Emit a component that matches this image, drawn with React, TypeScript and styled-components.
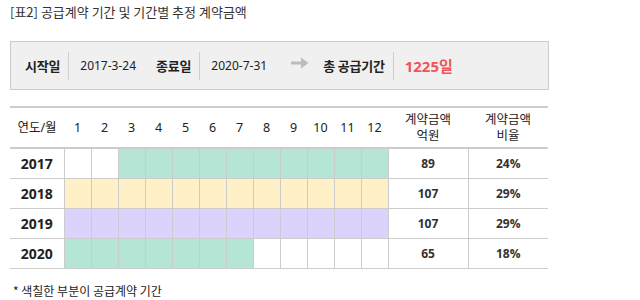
import React from "react";
import styled, { createGlobalStyle } from "styled-components";

const Global = createGlobalStyle`
  html, body { margin: 0; padding: 0; background: #fff; }
  body { font-family: "Noto Sans", "Noto Sans CJK KR", sans-serif; color: #222; }
`;

const Page = styled.div`
  width: 640px;
  height: 300px;
  box-sizing: border-box;
  padding: 3px 10px 0 10px;
  overflow: hidden;
`;

const Title = styled.div`
  font-family: "Noto Sans CJK KR", sans-serif;
  font-size: 13px;
  line-height: 18px;
  color: #333;
`;

const Summary = styled.div`
  margin-top: 20px;
  width: 539px;
  height: 49px;
  box-sizing: border-box;
  border: 1px solid #cccccc;
  background: #f0f0f0;
  display: flex;
  align-items: center;
  padding-left: 14px;
`;

const Field = styled.div<{ $after?: number }>`
  display: flex;
  align-items: center;
  margin-right: ${(p) => p.$after ?? 0}px;
`;

const Label = styled.span`
  font-family: "Noto Sans CJK KR", sans-serif;
  font-weight: 700;
  font-size: 13px;
  color: #222;
  letter-spacing: -0.2px;
`;

const Divider = styled.span`
  width: 1px;
  height: 28px;
  background: #cfcfcf;
  margin: 0 11px 0 8px;
`;

const Value = styled.span`
  font-family: "Noto Sans", sans-serif;
  font-size: 12px;
  color: #222;
`;

const Total = styled.span`
  font-family: "Noto Sans", "Noto Sans CJK KR", sans-serif;
  font-weight: 700;
  font-size: 15px;
  color: #f25357;
`;

const Arrow = styled.svg`
  width: 18px;
  height: 12px;
  margin-right: 14px;
  margin-top: -6px;
`;

const Table = styled.table`
  margin-top: 16px;
  width: 538px;
  border-collapse: collapse;
  table-layout: fixed;
  border-top: 2px solid #cccccc;
`;

const HeadCell = styled.th`
  height: 39px;
  padding: 0;
  font-family: "Noto Sans", "Noto Sans CJK KR", sans-serif;
  font-weight: 400;
  font-size: 12.5px;
  line-height: 16px;
  color: #222;
  text-align: center;
  border-bottom: 2px solid #cccccc;
`;

const YearCell = styled.td`
  height: 29px;
  padding: 0;
  text-align: center;
  font-family: "Noto Sans", sans-serif;
  font-weight: 700;
  font-size: 14px;
  color: #222;
  border-bottom: 1px solid #cccccc;
  border-right: 1px solid #cccccc;
`;

const MonthCell = styled.td<{ $bg: string }>`
  padding: 0;
  background: ${(p) => p.$bg};
  border: 1px solid #cccccc;
  border-top: none;
`;

const NumCell = styled.td`
  padding: 0;
  text-align: center;
  font-family: "Open Sans", sans-serif;
  font-weight: 700;
  font-size: 12px;
  color: #333;
  border-bottom: 1px solid #cccccc;
  border-right: 1px solid #cccccc;
  &:last-child { border-right: none; }
`;

const Note = styled.div`
  margin-top: 13px;
  padding-left: 3px;
  font-family: "Noto Sans CJK KR", sans-serif;
  font-size: 12px;
  color: #222;
`;

const GREEN = "#b5e5d4";
const YELLOW = "#fff0c8";
const PURPLE = "#dcd2fb";

const rows = [
  { year: "2017", color: GREEN, from: 3, to: 12, amount: "89", ratio: "24%" },
  { year: "2018", color: YELLOW, from: 1, to: 12, amount: "107", ratio: "29%" },
  { year: "2019", color: PURPLE, from: 1, to: 12, amount: "107", ratio: "29%" },
  { year: "2020", color: GREEN, from: 1, to: 7, amount: "65", ratio: "18%" },
];

const months = Array.from({ length: 12 }, (_, i) => i + 1);

export default function App() {
  return (
    <>
      <Global />
      <Page>
        <Title>[표2] 공급계약 기간 및 기간별 추정 계약금액</Title>
        <Summary>
          <Field $after={20}>
            <Label>시작일</Label>
            <Divider />
            <Value>2017-3-24</Value>
          </Field>
          <Field $after={24}>
            <Label>종료일</Label>
            <Divider />
            <Value>2020-7-31</Value>
          </Field>
          <Arrow viewBox="0 0 18 12">
            <path d="M0 4.5 H10 V0.5 L17.5 6 L10 11.5 V7.5 H0 Z" fill="#bdbdbd" />
          </Arrow>
          <Field>
            <Label>총 공급기간</Label>
            <Divider />
            <Total>1225일</Total>
          </Field>
        </Summary>
        <Table>
          <colgroup>
            <col style={{ width: 54 }} />
            {months.map((m) => (
              <col key={m} style={{ width: 27 }} />
            ))}
            <col style={{ width: 80 }} />
            <col style={{ width: 80 }} />
          </colgroup>
          <thead>
            <tr>
              <HeadCell>연도/월</HeadCell>
              {months.map((m) => (
                <HeadCell key={m}>{m}</HeadCell>
              ))}
              <HeadCell>
                계약금액
                <br />
                억원
              </HeadCell>
              <HeadCell>
                계약금액
                <br />
                비율
              </HeadCell>
            </tr>
          </thead>
          <tbody>
            {rows.map((r) => (
              <tr key={r.year}>
                <YearCell>{r.year}</YearCell>
                {months.map((m) => (
                  <MonthCell key={m} $bg={m >= r.from && m <= r.to ? r.color : "#ffffff"} />
                ))}
                <NumCell>{r.amount}</NumCell>
                <NumCell>{r.ratio}</NumCell>
              </tr>
            ))}
          </tbody>
        </Table>
        <Note>* 색칠한 부분이 공급계약 기간</Note>
      </Page>
    </>
  );
}
